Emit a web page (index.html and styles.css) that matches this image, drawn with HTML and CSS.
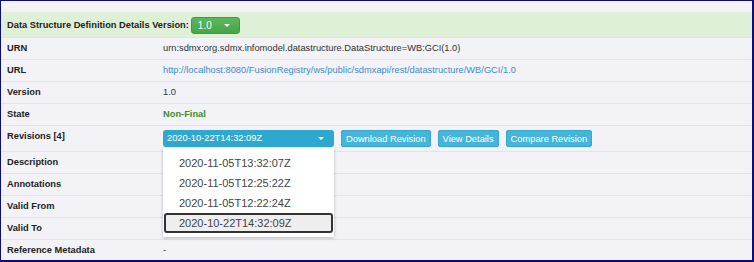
FILE: index.html
```html
<!DOCTYPE html>
<html lang="en">
<head>
    <meta charset="UTF-8">
    <title>Data Structure Definition Details</title>
    <link rel="stylesheet" href="styles.css">
</head>
<body>
    <div class="frame">
        <div class="panel">
            <!-- Cabecera -->
            <div class="panel-head">
                <span>Data Structure Definition Details Version:</span>
                <span class="btn-version">1.0 <span class="caret"></span></span>
            </div>

            <div class="row"><div class="label">URN</div><div class="value">urn:sdmx:org.sdmx.infomodel.datastructure.DataStructure=WB:GCI(1.0)</div></div>
            <div class="row"><div class="label">URL</div><div class="value"><a href="#">http://localhost:8080/FusionRegistry/ws/public/sdmxapi/rest/datastructure/WB/GCI/1.0</a></div></div>
            <div class="row"><div class="label">Version</div><div class="value">1.0</div></div>
            <div class="row"><div class="label">State</div><div class="value state">Non-Final</div></div>

            <div class="row row-rev">
                <div class="label">Revisions [4]</div>
                <div class="value rev">
                    <div class="rev-select">
                        <span>2020-10-22T14:32:09Z</span>
                        <span class="caret"></span>
                        <ul class="rev-menu">
                            <li>2020-11-05T13:32:07Z</li>
                            <li>2020-11-05T12:25:22Z</li>
                            <li>2020-11-05T12:22:24Z</li>
                            <li class="selected">2020-10-22T14:32:09Z</li>
                        </ul>
                    </div>
                    <button>Download Revision</button>
                    <button>View Details</button>
                    <button>Compare Revision</button>
                </div>
            </div>

            <div class="row"><div class="label">Description</div><div class="value"></div></div>
            <div class="row"><div class="label">Annotations</div><div class="value"></div></div>
            <div class="row"><div class="label">Valid From</div><div class="value"></div></div>
            <div class="row"><div class="label">Valid To</div><div class="value"></div></div>
            <div class="row last"><div class="label">Reference Metadata</div><div class="value">-</div></div>
        </div>
    </div>
</body>
</html>
```

FILE: styles.css
```css
* {
    box-sizing: border-box;
    margin: 0;
    padding: 0;
}

body {
    font-family: 'Liberation Sans', Arial, sans-serif;
    font-size: 9.3px;
    color: #333;
    background: #f2f2f7;
}

.frame {
    width: 754px;
    height: 262px;
    border-style: solid;
    border-color: #0d0d73;
    border-width: 1px 2px 2px 1px;
    background: #f2f2f7;
    padding-top: 11px;
    overflow: hidden;
}

.panel-head {
    height: 26px;
    background: #dff0d8;
    border-bottom: 1px solid #e2e2e8;
    display: flex;
    align-items: center;
    gap: 2px;
    padding: 0 6px;
    font-weight: bold;
    color: #222;
}

.btn-version {
    display: flex;
    align-items: center;
    justify-content: space-between;
    width: 49px;
    height: 17px;
    padding: 0 9px 0 6px;
    margin-top: 1px;
    border-radius: 3px;
    border: 1px solid #3f9a3f;
    background: linear-gradient(#5cb85c, #47a447);
    color: #fff;
    font-weight: normal;
    font-size: 10px;
}

.caret {
    width: 0;
    height: 0;
    border-left: 3px solid transparent;
    border-right: 3px solid transparent;
    border-top: 3px solid #fff;
}

.row {
    display: grid;
    grid-template-columns: 156px 1fr;
    padding: 5px 6px 0;
    height: 22px;
    border-bottom: 1px solid #e2e2e8;
    line-height: 11px;
}

.row.last {
    border-bottom: none;
}

.label {
    font-weight: bold;
    color: #222;
}

.value a {
    color: #428bca;
    text-decoration: none;
}

.state {
    color: #3a8f2a;
    font-weight: bold;
}

.row-rev {
    height: 26px;
    padding-top: 4px;
}

.row-rev .label {
    padding-top: 1px;
}

.rev {
    display: flex;
    align-items: flex-start;
    gap: 7px;
}

.rev-select {
    position: relative;
    width: 171px;
    height: 17px;
    display: flex;
    align-items: center;
    justify-content: space-between;
    padding: 0 10px 0 4px;
    border-radius: 3px;
    background: #2fa8d0;
    color: #fff;
}

.rev button {
    height: 17px;
    padding: 0 4px;
    border: 1px solid #34a8cf;
    border-radius: 2px;
    background: #45b5da;
    color: #fff;
    font-family: inherit;
    font-size: 9.3px;
}

.rev-menu {
    position: absolute;
    top: 18px;
    left: 0;
    width: 171px;
    list-style: none;
    background: #fff;
    padding: 5px 0 4px;
    box-shadow: 0 1px 3px rgba(0, 0, 0, 0.25);
    font-size: 11px;
    color: #444;
    z-index: 2;
}

.rev-menu li {
    height: 20px;
    line-height: 20px;
    padding-left: 16px;
}

.rev-menu li.selected {
    margin: 0 1px;
    padding-left: 13px;
    line-height: 16px;
    border: 2px solid #333;
    border-radius: 3px;
    background: #eeeeee;
}
```
